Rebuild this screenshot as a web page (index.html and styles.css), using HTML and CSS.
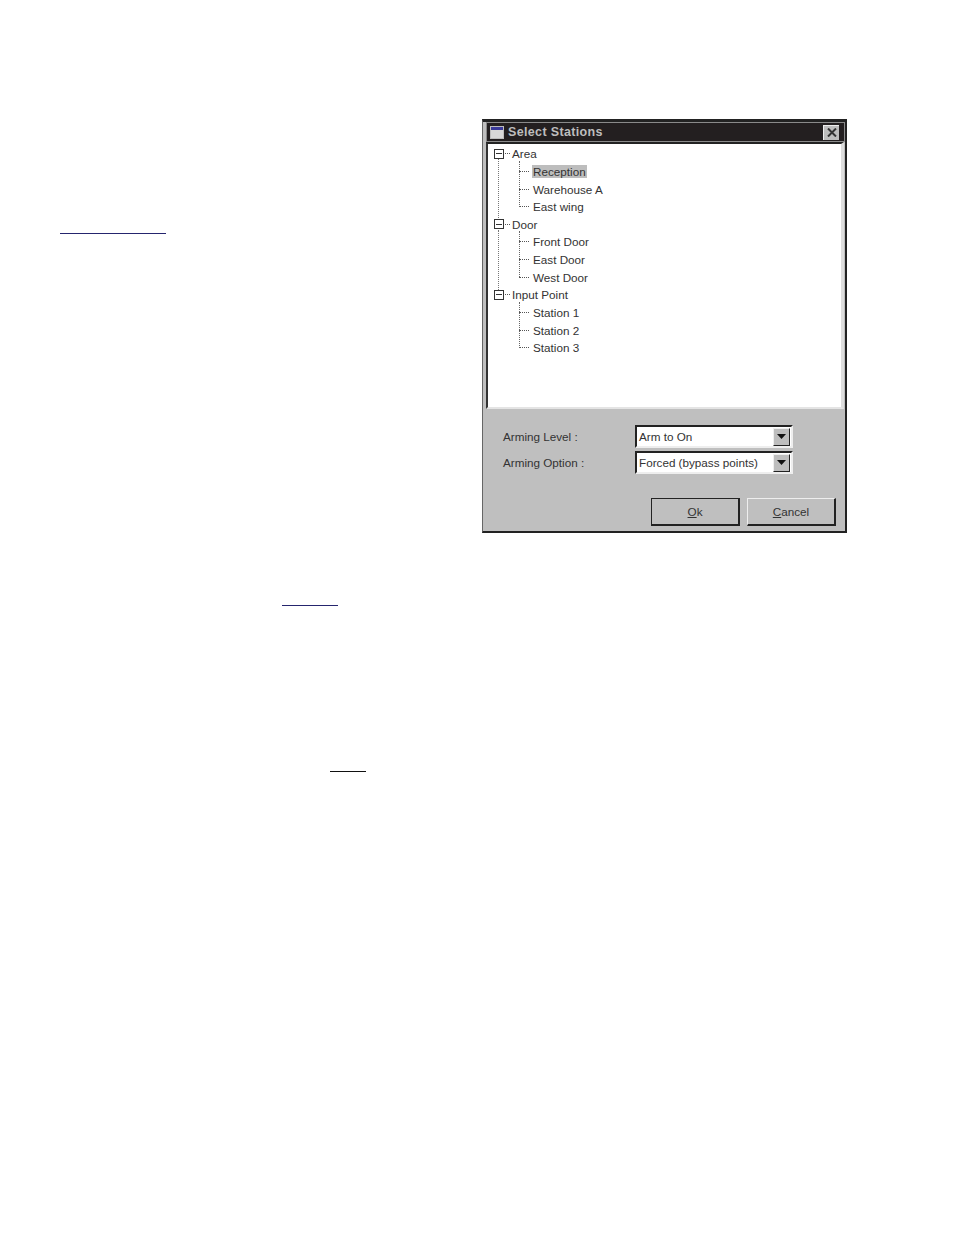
FILE: index.html
```html
<!DOCTYPE html>
<html lang="en">
<head>
<meta charset="utf-8">
<title>Select Stations</title>
<link rel="stylesheet" href="styles.css">
</head>
<body>
<main class="page">
  <div class="top">
    <div class="left"><div class="rule rule-a"></div></div>
    <section class="dialog">
      <header class="titlebar">
        <svg class="app-icon" width="14" height="13" viewBox="0 0 14 13"><rect width="14" height="13" fill="#bdbdbd"/><rect x="1" y="1" width="12" height="3" fill="#3a3a9a"/><rect x="1" y="4" width="12" height="8" fill="#d8d8d8"/></svg>
        <span class="title">Select Stations</span>
        <button class="close"><svg width="10" height="9" viewBox="0 0 10 9"><path d="M1 0.5 L9 8.5 M9 0.5 L1 8.5" stroke="#333" stroke-width="2"/></svg></button>
      </header>
      <div class="tree">
        <div class="group">
          <div class="node root"><span class="box"></span><span class="dots"></span><span>Area</span></div>
          <div class="kids">
            <div class="node"><span class="dash"></span><span class="sel">Reception</span></div>
            <div class="node"><span class="dash"></span><span class="lbl">Warehouse A</span></div>
            <div class="node"><span class="dash"></span><span class="lbl">East wing</span></div>
          </div>
        </div>
        <div class="group">
          <div class="node root"><span class="box"></span><span class="dots"></span><span>Door</span></div>
          <div class="kids">
            <div class="node"><span class="dash"></span><span class="lbl">Front Door</span></div>
            <div class="node"><span class="dash"></span><span class="lbl">East Door</span></div>
            <div class="node"><span class="dash"></span><span class="lbl">West Door</span></div>
          </div>
        </div>
        <div class="group last">
          <div class="node root"><span class="box"></span><span class="dots"></span><span>Input Point</span></div>
          <div class="kids">
            <div class="node"><span class="dash"></span><span class="lbl">Station 1</span></div>
            <div class="node"><span class="dash"></span><span class="lbl">Station 2</span></div>
            <div class="node"><span class="dash"></span><span class="lbl">Station 3</span></div>
          </div>
        </div>
      </div>
      <div class="panel">
        <div class="field"><label>Arming Level :</label><div class="combo"><span>Arm to On</span><span class="arrow"><svg width="9" height="5" viewBox="0 0 9 5"><path d="M0 0H9L4.5 5Z" fill="#111"/></svg></span></div></div>
        <div class="field"><label>Arming Option :</label><div class="combo"><span>Forced (bypass points)</span><span class="arrow"><svg width="9" height="5" viewBox="0 0 9 5"><path d="M0 0H9L4.5 5Z" fill="#111"/></svg></span></div></div>
        <div class="buttons">
          <button class="btn default"><u>O</u>k</button>
          <button class="btn"><u>C</u>ancel</button>
        </div>
      </div>
    </section>
  </div>
  <div class="rule rule-b"></div>
  <div class="rule rule-c"></div>
</main>
</body>
</html>
```
FILE: styles.css
```css
* { box-sizing: border-box; }
html, body { margin: 0; background: #fff; }
.page { width: 954px; height: 1235px; padding-top: 119px; font-family: "Liberation Sans", Arial, sans-serif; font-size: 11.7px; color: #333; overflow: hidden; }
.top { display: flex; height: 414px; }
.left { width: 482px; padding: 114px 0 0 60px; }
.rule { height: 1px; background: #25256e; }
.rule-a { width: 106px; }
.rule-b { width: 56px; margin: 72px 0 0 282px; }
.rule-c { width: 36px; margin: 165px 0 0 330px; background: #111; }

.dialog { width: 365px; height: 414px; background: #bfbfbf; border-style: solid; border-color: #222 #222 #222 #666; border-width: 3px 2px 2px 1px; display: flex; flex-direction: column; }
.titlebar { height: 20px; flex: none; margin-left: 3px; display: flex; align-items: center; padding: 0 5px 0 3px; background: #231f20; border: 1px solid #8a8a8a; }
.app-icon { flex: none; margin-right: 4px; }
.title { color: #bdbdbd; font-weight: bold; font-size: 12.5px; flex: 1; letter-spacing: 0.35px; }
.close { width: 16px; height: 15px; padding: 0; background: #bdbdbd; border: 0; border-top: 1px solid #eee; border-left: 1px solid #eee; display: flex; align-items: center; justify-content: center; }
.tree { height: 267px; flex: none; margin: 0 1px 0 3px; background: #fff; border-left: 2px solid #333; border-top: 2px solid #222; border-right: 3px solid #ddd; border-bottom: 2px solid #e4e4e4; padding: 1px 0 0 6px; }
.node { height: 17.64px; display: flex; align-items: center; white-space: nowrap; }
.box { width: 10px; height: 10px; border: 1px solid #333; background: linear-gradient(#333, #333) center / 6px 1px no-repeat; flex: none; }
.dots { width: 5px; margin: 0 2px 0 1px; border-top: 1px dotted #555; flex: none; }
.group { position: relative; }
.group::before { content: ""; position: absolute; left: 4px; top: 14px; bottom: -4px; border-left: 1px dotted #777; }
.group.last::before { display: none; }
.kids { margin-left: 25px; position: relative; }
.kids::before { content: ""; position: absolute; left: 0; top: -2px; bottom: 9px; border-left: 1px dotted #666; }
.dash { width: 10px; border-top: 1px dotted #555; flex: none; margin-right: 3px; }
.lbl, .sel { padding: 0 1px; }
.sel { background: #bdbdbd; }
.panel { flex: 1; padding: 16px 0 0 20px; }
.field { display: flex; align-items: center; height: 23px; margin-bottom: 3px; }
.field label { width: 132px; }
.combo { width: 158px; height: 23px; background: #fff; border: 2px solid #222; border-right-color: #eee; border-bottom-color: #eee; display: flex; align-items: center; justify-content: space-between; padding-left: 2px; }
.arrow { width: 17px; height: 18px; background: #bdbdbd; border: 1px solid #eee; border-right-color: #222; border-bottom-color: #222; display: flex; align-items: center; justify-content: center; margin-right: 1px; }
.buttons { display: flex; gap: 7px; margin: 24px 0 0 148px; }
.btn { width: 89px; height: 28px; padding: 0; font: 11.7px "Liberation Sans", Arial, sans-serif; color: #333; background: #bfbfbf; border: 1px solid #eee; border-right: 2px solid #222; border-bottom: 2px solid #222; }
.btn.default { border-color: #222; }
```
